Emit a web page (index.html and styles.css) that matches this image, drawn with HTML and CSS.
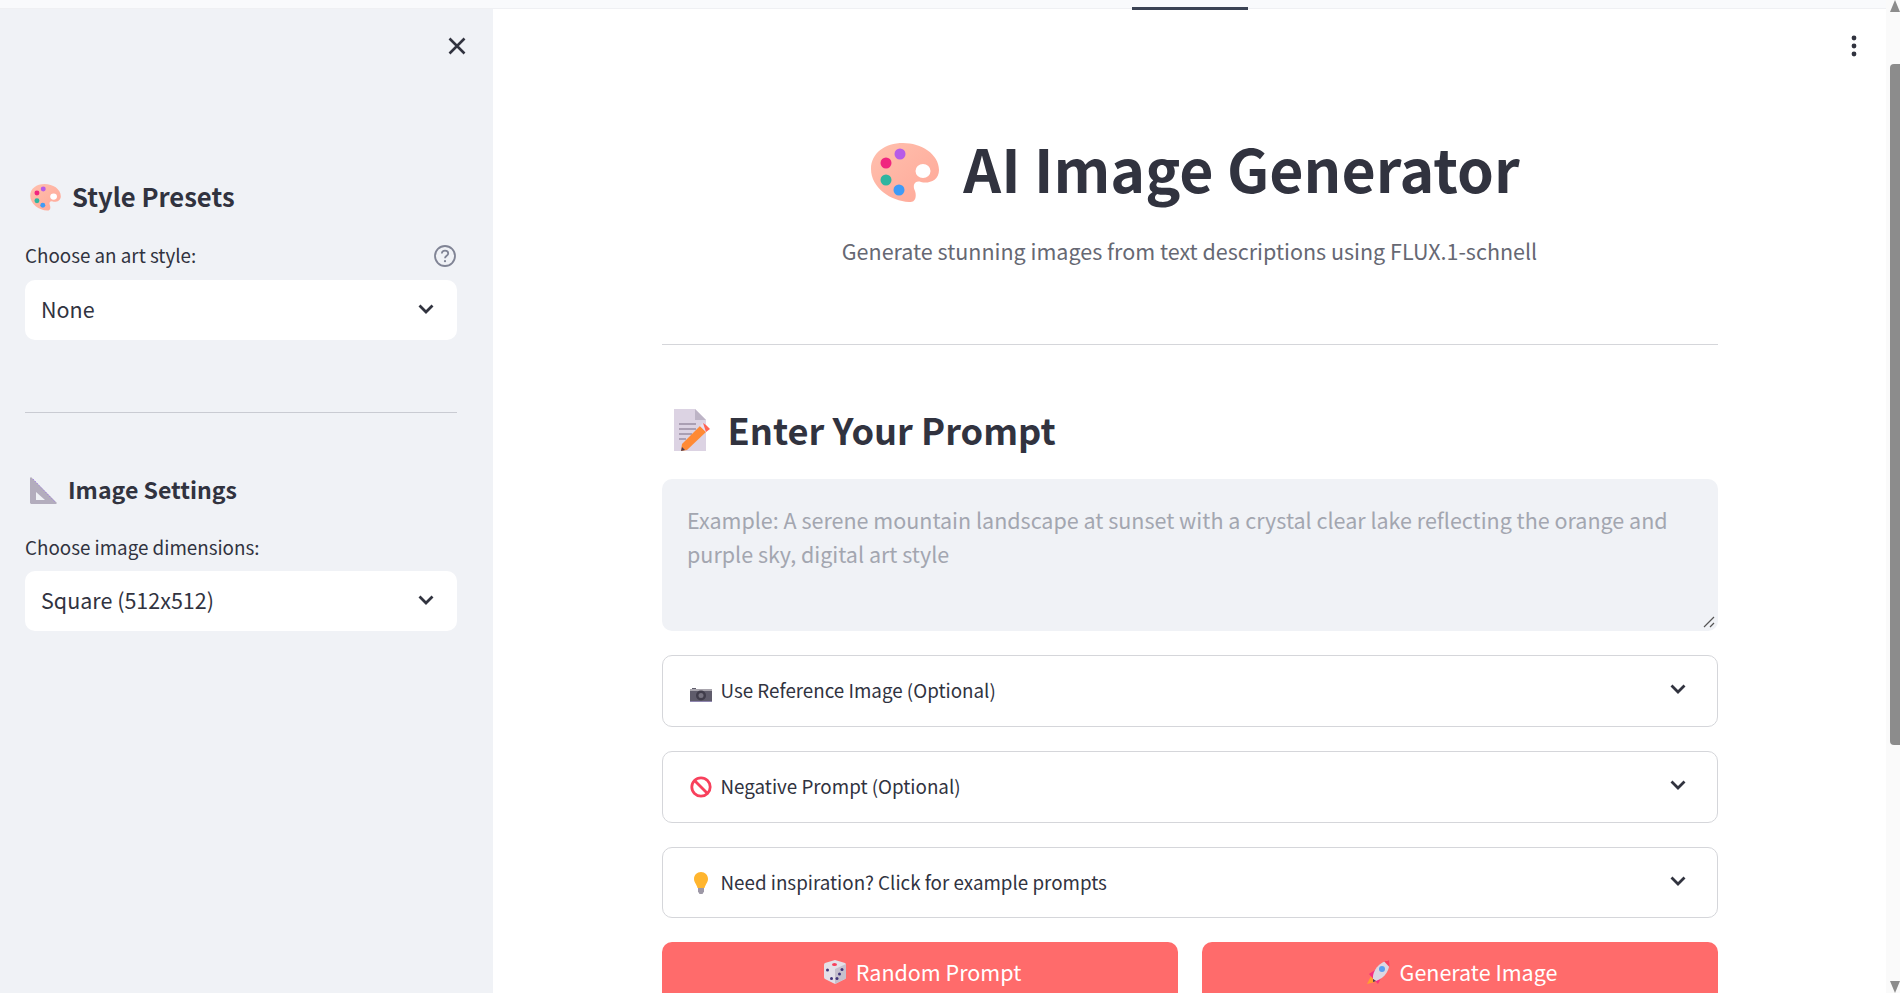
FILE: index.html
```html
<!DOCTYPE html>
<html>
<head>
<meta name="viewport" content="width=device-width, minimum-scale=1.0">
<title>AI Image Generator</title>
<link rel="stylesheet" href="styles.css">
</head>
<body>
<svg class="defs" width="0" height="0">
  <defs>
    <linearGradient id="peach" x1="0" y1="0" x2="1" y2="1">
      <stop offset="0" stop-color="#ffc0ae"/>
      <stop offset="1" stop-color="#ffa898"/>
    </linearGradient>
  </defs>
  <symbol id="palette" viewBox="0 0 68 60">
    <path d="M32 0C50 0 68 11 68 27C68 38 57 41 50 39C44 37 41 42 44 48C46 54 44 60 38 59C20 58 0 45 0 26C0 10 14 0 32 0Z" fill="url(#peach)"/>
    <ellipse cx="52" cy="28" rx="7.5" ry="7" fill="#fff"/>
    <circle cx="29" cy="11" r="5.5" fill="#b65be8"/>
    <circle cx="15" cy="20" r="5.5" fill="#f0267f"/>
    <circle cx="15" cy="37" r="5.5" fill="#2fb5a0"/>
    <circle cx="28" cy="47" r="5.5" fill="#3f9bf7"/>
  </symbol>
  <symbol id="ruler" viewBox="0 0 27 27">
    <path d="M0 1L1 0L27 26L26 27H1L0 26Z" fill="#b3adbd"/>
    <path d="M6 15L15 23H6Z" fill="#f0f2f6"/>
    <path d="M3 2L25 25" stroke="#9a6cf0" stroke-width="1" stroke-dasharray="1 2"/>
  </symbol>
  <symbol id="memo" viewBox="0 0 32 42" overflow="visible">
    <path d="M0 0H21L32 11V42H0Z" fill="#dcd3e3"/>
    <path d="M21 0L32 11H21Z" fill="#bdb4c6"/>
    <path d="M5 15H22M5 20H22M5 25H18M5 30H12" stroke="#998ea4" stroke-width="1.5"/>
    <path d="M8 35L26 17L32 23L13 41L7 42Z" fill="#ff8a35"/>
    <path d="M26 17L29 14L35 20L32 23Z" fill="#e9e0f0"/>
    <path d="M29 14L32 16L36 20L32 23Z" fill="#ff6454"/>
    <path d="M8 38L7 42L11 41Z" fill="#4a3d52"/>
  </symbol>
  <symbol id="camera" viewBox="0 0 22 15">
    <path d="M0 2H2V1H6V2H22V15H0Z" fill="#5f5c6b"/>
    <path d="M0 2H22V4H0Z" fill="#a9a6ae"/>
    <path d="M0 14H22V15H0Z" fill="#8f86b0"/>
    <circle cx="11" cy="8.500" r="5" fill="#403d4b"/>
    <circle cx="11" cy="8.500" r="2.500" fill="#75727f"/>
  </symbol>
  <symbol id="prohibited" viewBox="0 0 22 22">
    <circle cx="11" cy="11" r="9.200" fill="none" stroke="#f8405c" stroke-width="2.800"/>
    <path d="M4.500 4.500L17.500 17.500" stroke="#f8405c" stroke-width="2.800"/>
  </symbol>
  <symbol id="bulb" viewBox="0 0 22 22">
    <path d="M11 0C15 0 18 3 18 7C18 10.500 15.500 12 14.500 16H7.500C6.500 12 4 10.500 4 7C4 3 7 0 11 0Z" fill="#ffb52e"/>
    <path d="M8 16H14V19.500L12.500 22H9.500L8 19.500Z" fill="#9d98a6"/>
  </symbol>
  <symbol id="dice" viewBox="0 0 24 24">
    <path d="M12 0L22 3Q23 3.500 23 5V17Q23 18.500 22 19L13 23.500Q12 24 11 23.500L2 19Q1 18.500 1 17V5Q1 3.500 2 3Z" fill="#e4e0e8"/>
    <path d="M12 9L23 4V17Q23 18.500 22 19L13 23.500H12Z" fill="#c6c0cd"/>
    <ellipse cx="11.500" cy="4.500" rx="2.500" ry="1.500" fill="#f8405c"/>
    <g fill="#43357a">
      <circle cx="4.500" cy="10" r="1.500"/><circle cx="8.500" cy="18.500" r="1.500"/>
      <circle cx="19" cy="9.500" r="1.500"/><circle cx="16.500" cy="14" r="1.500"/><circle cx="14" cy="18.500" r="1.500"/>
    </g>
  </symbol>
  <symbol id="rocket" viewBox="0 0 24 26">
    <path d="M4 17L0 25L8 23Z" fill="#ffa02e"/>
    <path d="M2 15L8 11L14 19L11 25Z" fill="#f5307f"/>
    <path d="M6 20C5 12 12 3 22 1C24 10 18 19 9 22Z" fill="#dcd7e2"/>
    <path d="M17 2.200L22 1C22.700 3 22.800 5.500 22.400 8Z" fill="#f8405c"/>
    <circle cx="15" cy="10" r="3" fill="#5a9ff0"/>
    <path d="M6 20L9 22L6 23Z" fill="#4a3d52"/>
  </symbol>
</svg>

<div class="app">
  <div class="page">
    <div class="topbar"><div class="progress"></div></div>
    <div class="columns">
      <aside class="sidebar">
        <div class="close-row">
          <svg class="close" viewBox="0 0 18 18"><path d="M1.500 1.500L16.500 16.500M16.500 1.500L1.500 16.500"/></svg>
        </div>

        <h3 class="side-heading first"><svg class="emoji-palette-sm"><use href="#palette"/></svg><span>Style Presets</span></h3>
        <div class="label-row first-label">
          <span>Choose an art style:</span>
          <svg class="help" viewBox="0 0 24 24">
            <circle cx="12" cy="12" r="10"/>
            <path d="M8.800 9.500C9 7.600 10.400 6.700 12 6.700C13.700 6.700 15.200 7.800 15.200 9.500C15.200 11.800 12 11.800 12 14.300"/>
            <circle class="dot" cx="12" cy="17.200" r="1.100"/>
          </svg>
        </div>
        <div class="select">
          <span>None</span>
          <svg class="chevron" viewBox="0 0 16 10"><path d="M1.500 1.500L8 8L14.500 1.500"/></svg>
        </div>

        <hr class="side-rule">

        <h3 class="side-heading second"><svg class="emoji-ruler"><use href="#ruler"/></svg><span>Image Settings</span></h3>
        <div class="label-row second-label"><span>Choose image dimensions:</span></div>
        <div class="select">
          <span>Square (512x512)</span>
          <svg class="chevron" viewBox="0 0 16 10"><path d="M1.500 1.500L8 8L14.500 1.500"/></svg>
        </div>
      </aside>

      <main class="main">
        <svg class="kebab" viewBox="0 0 6 24"><circle cx="3" cy="4" r="2.400"/><circle cx="3" cy="12" r="2.400"/><circle cx="3" cy="20" r="2.400"/></svg>
        <div class="content">
          <h1 class="title"><svg class="emoji-palette-lg"><use href="#palette"/></svg>AI Image Generator</h1>
          <p class="subtitle">Generate stunning images from text descriptions using FLUX.1-schnell</p>
          <hr class="main-rule">
          <h2 class="prompt-heading"><svg class="emoji-memo"><use href="#memo"/></svg><span>Enter Your Prompt</span></h2>
          <div class="prompt-box">
            Example: A serene mountain landscape at sunset with a crystal clear lake reflecting the orange and purple sky, digital art style
            <svg class="grip" viewBox="0 0 12 12"><path d="M1 11L11 1M7 11L11 7"/></svg>
          </div>

          <div class="expander">
            <svg class="emoji-camera"><use href="#camera"/></svg>
            <span class="expander-text">Use Reference Image (Optional)</span>
            <svg class="chevron" viewBox="0 0 16 10"><path d="M1.500 1.500L8 8L14.500 1.500"/></svg>
          </div>
          <div class="expander">
            <svg class="emoji-prohibited"><use href="#prohibited"/></svg>
            <span class="expander-text">Negative Prompt (Optional)</span>
            <svg class="chevron" viewBox="0 0 16 10"><path d="M1.500 1.500L8 8L14.500 1.500"/></svg>
          </div>
          <div class="expander last">
            <svg class="emoji-bulb"><use href="#bulb"/></svg>
            <span class="expander-text">Need inspiration? Click for example prompts</span>
            <svg class="chevron" viewBox="0 0 16 10"><path d="M1.500 1.500L8 8L14.500 1.500"/></svg>
          </div>

          <div class="buttons">
            <div class="button"><svg class="emoji-btn"><use href="#dice"/></svg><span>Random Prompt</span></div>
            <div class="button"><svg class="emoji-btn"><use href="#rocket"/></svg><span>Generate Image</span></div>
          </div>
        </div>
      </main>
    </div>
  </div>

  <div class="scrollbar">
    <div class="arrow-up"></div>
    <div class="thumb"></div>
    <div class="arrow-down"></div>
  </div>
</div>
</body>
</html>
```

FILE: styles.css
```css
html, body {
  margin: 0;
  height: 100%;
  overflow: hidden;
}

body {
  background-color: #fff;
  color: #31333f;
  font-family: "Noto Sans CJK SC", "Noto Sans", sans-serif;
}

.defs {
  display: block;
  height: 0;
}

.app {
  display: flex;
  height: 993px;
  overflow: hidden;
}

.page {
  flex: 1;
  min-width: 0;
  display: flex;
  flex-direction: column;
}

/* top strip with the running-indicator tab */

.topbar {
  height: 8px;
  flex: none;
  background-color: #f9fafc;
  border-bottom: 1px solid #eff0f3;
  display: flex;
  justify-content: center;
  padding-left: 493px;
}

.progress {
  width: 116px;
  height: 3px;
  margin-top: 7px;
  background-color: #3b4354;
  position: relative;
}

.columns {
  flex: 1;
  display: flex;
  min-height: 0;
}

/* sidebar */

.sidebar {
  width: 432px;
  flex: none;
  padding: 0 36px 0 25px;
  background-color: #f0f2f6;
}

.close-row {
  height: 46px;
  padding-top: 28px;
  display: flex;
  justify-content: flex-end;
}

.close {
  width: 18px;
  height: 18px;
  margin-right: -9px;
  fill: none;
  stroke: #31333f;
  stroke-width: 2.6;
}

.side-heading {
  margin: 0;
  height: 40px;
  display: flex;
  align-items: center;
  font-size: 25.600px;
  line-height: 38px;
  font-weight: 600;
}

.side-heading span {
  margin-bottom: 2px;
}

.side-heading.first {
  margin-top: 94px;
}

.side-heading.second {
  margin-top: 57px;
  font-size: 23.100px;
}

.emoji-palette-sm {
  width: 31px;
  height: 27px;
  margin: 0 11px 0 5px;
}

.emoji-ruler {
  width: 27px;
  height: 27px;
  margin: 0 11px 0 5px;
}

.label-row {
  height: 28px;
  display: flex;
  align-items: center;
  justify-content: space-between;
  font-size: 18.800px;
  line-height: 28px;
}

.label-row span {
  margin-bottom: 1px;
}

.first-label span {
  margin-bottom: 2px;
}

.first-label {
  margin-top: 25px;
}

.second-label {
  margin-top: 23px;
}

.help {
  width: 24px;
  height: 24px;
  fill: none;
  stroke: #808495;
  stroke-width: 1.8;
}

.help .dot {
  fill: #808495;
  stroke: none;
}

.select {
  margin-top: 10px;
  height: 60px;
  padding: 0 23px 0 16px;
  display: flex;
  align-items: center;
  justify-content: space-between;
  background-color: #fff;
  border-radius: 10px;
  font-size: 21.500px;
}

.select span {
  margin-bottom: 3px;
}

.chevron {
  width: 16px;
  height: 10px;
  fill: none;
  stroke: #31333f;
  stroke-width: 2.8;
}

.select .chevron {
  margin-bottom: 2px;
}

.side-rule {
  margin: 72px 0 0;
  border: 0;
  border-top: 1px solid #c9cbd2;
}

/* main column */

.main {
  flex: 1;
  min-width: 0;
  position: relative;
  display: flex;
  justify-content: center;
}

.kebab {
  position: absolute;
  top: 25px;
  right: 29px;
  width: 6px;
  height: 24px;
  fill: #31333f;
}

.content {
  width: 1056px;
  padding-top: 119px;
}

.title {
  margin: 0;
  height: 80px;
  padding-left: 12px;
  display: flex;
  align-items: center;
  justify-content: center;
  font-size: 59px;
  line-height: 80px;
  font-weight: 700;
}

.emoji-palette-lg {
  width: 68px;
  height: 60px;
  margin: 10px 24px 0 0;
}

.subtitle {
  margin: 26px 0 0;
  text-align: center;
  font-size: 21.500px;
  line-height: 34px;
  color: #666873;
}

.main-rule {
  margin: 76px 0 0;
  border: 0;
  border-top: 1px solid #d5d6da;
}

.prompt-heading {
  margin: 60px 0 0;
  height: 50px;
  display: flex;
  align-items: center;
  font-size: 36.200px;
  line-height: 48px;
  font-weight: 600;
}

.prompt-heading span {
  margin-bottom: 3px;
}

.emoji-memo {
  width: 32px;
  height: 42px;
  margin: 0 22px 0 12px;
  overflow: visible;
}

.prompt-box {
  margin-top: 24px;
  height: 152px;
  box-sizing: border-box;
  padding: 24px 25.500px;
  position: relative;
  background-color: #f0f2f6;
  border-radius: 10px;
  font-size: 21.500px;
  line-height: 34px;
  color: #a3a6b0;
}

.grip {
  position: absolute;
  right: 3px;
  bottom: 3px;
  width: 12px;
  height: 12px;
  fill: none;
  stroke: #555;
  stroke-width: 1.200;
}

.expander {
  margin-top: 24px;
  height: 70px;
  padding: 0 32px 0 27px;
  display: flex;
  align-items: center;
  border: 1px solid #d5d6da;
  border-radius: 10px;
  font-size: 18.800px;
}

.expander.last {
  height: 69px;
}

.expander .chevron {
  margin: 0 -1px 4px 0;
}

.expander-text {
  flex: 1;
  margin: 0 0 3px 9px;
}

.emoji-camera {
  width: 22px;
  height: 15px;
  margin-top: 7px;
}

.emoji-prohibited {
  width: 22px;
  height: 22px;
}

.emoji-bulb {
  width: 22px;
  height: 22px;
}

.buttons {
  margin-top: 24px;
  display: flex;
  gap: 24px;
}

.button {
  flex: 1;
  height: 60px;
  padding-left: 5px;
  display: flex;
  align-items: center;
  justify-content: center;
  background-color: #ff6b6b;
  border-radius: 10px;
  color: #fff;
  font-size: 21.500px;
}

.button span {
  margin-bottom: 2px;
}

.emoji-btn {
  width: 24px;
  height: 26px;
  margin-right: 9px;
}

/* the page's scrollbar */

.scrollbar {
  width: 14px;
  flex: none;
  box-sizing: border-box;
  padding-left: 4px;
  background-color: #fafafa;
  display: flex;
  flex-direction: column;
  justify-content: space-between;
}

.arrow-up {
  height: 0;
  border-left: 5px solid transparent;
  border-right: 5px solid transparent;
  border-bottom: 12px solid #8c8c8c;
}

.thumb {
  height: 681px;
  margin-bottom: 236px;
  margin-top: 52px;
  background-color: #8c8c8c;
  border-radius: 4px 0 0 4px;
}

.arrow-down {
  height: 0;
  border-left: 5px solid transparent;
  border-right: 5px solid transparent;
  border-top: 12px solid #8c8c8c;
}
```
